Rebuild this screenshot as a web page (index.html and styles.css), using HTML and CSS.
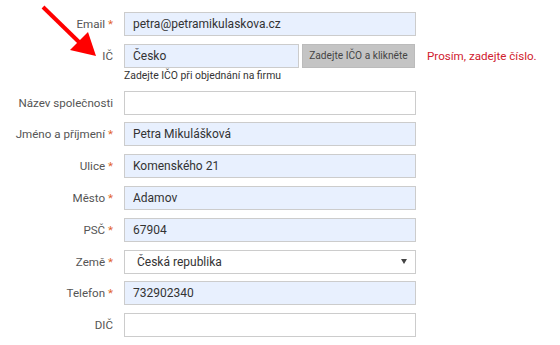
FILE: index.html
```html
<!DOCTYPE html>
<html lang="cs">
  <head>
    <meta charset="UTF-8" />
    <title>Objednávka</title>
    <link rel="stylesheet" href="styles.css">
  </head>
  <body>
    <svg class="arrow" width="110" height="70" viewBox="0 0 110 70">
      <line x1="43" y1="7" x2="80" y2="43" stroke="#ff0000" stroke-width="4" />
      <polygon points="96,56 70,50 88,32" fill="#ff0000" />
    </svg>

    <form class="order">
      <label class="order__label">Email <span class="req">*</span></label>
      <input class="order__input filled" type="text" value="petra@petramikulaskova.cz" />

      <label class="order__label">IČ</label>
      <div class="ico">
        <div class="ico__line">
          <div class="order__input filled ico__input">Česko</div>
          <button type="button" class="ico__btn">Zadejte IČO a klikněte</button>
          <span class="ico__error">Prosím, zadejte číslo.</span>
        </div>
        <div class="ico__hint">Zadejte IČO při objednání na firmu</div>
      </div>

      <label class="order__label">Název společnosti</label>
      <input class="order__input" type="text" />

      <label class="order__label">Jméno a příjmení <span class="req">*</span></label>
      <input class="order__input filled" type="text" value="Petra Mikulášková" />

      <label class="order__label">Ulice <span class="req">*</span></label>
      <input class="order__input filled" type="text" value="Komenského 21" />

      <label class="order__label">Město <span class="req">*</span></label>
      <input class="order__input filled" type="text" value="Adamov" />

      <label class="order__label">PSČ <span class="req">*</span></label>
      <input class="order__input filled" type="text" value="67904" />

      <label class="order__label">Země <span class="req">*</span></label>
      <div class="order__input select">
        <span>Česká republika</span>
        <span class="select__caret"></span>
      </div>

      <label class="order__label">Telefon <span class="req">*</span></label>
      <input class="order__input filled" type="text" value="732902340" />

      <label class="order__label">DIČ</label>
      <input class="order__input" type="text" />
    </form>
  </body>
</html>
```

FILE: styles.css
```css
body {
  margin: 0;
  padding: 0;
  background-color: #ffffff;
  font-family: Roboto, "Liberation Sans", Arial, sans-serif;
  font-size: 12px;
  color: #333;
  position: relative;
}
.arrow {
  position: absolute;
  left: 0;
  top: 0;
}
.order {
  display: grid;
  grid-template-columns: 113px 292px;
  column-gap: 11px;
  row-gap: 7.8px;
  padding-top: 12px;
  align-items: start;
}
.order__label {
  text-align: right;
  color: #555;
  font-size: 11.6px;
  line-height: 24px;
  white-space: nowrap;
}
.req {
  color: #e2622c;
}
.order__input {
  box-sizing: border-box;
  height: 24px;
  width: 292px;
  margin: 0;
  padding: 0 8px;
  border: 1px solid #cccccc;
  background-color: #ffffff;
  font-family: inherit;
  font-size: 12px;
  line-height: 22px;
  color: #333;
  outline: none;
}
.order__input.filled {
  background-color: #e8f0fe;
}
.ico__line {
  display: flex;
  align-items: center;
  white-space: nowrap;
}
.ico__line > * {
  flex-shrink: 0;
}
.ico__input {
  width: 175px;
}
.ico__btn {
  box-sizing: border-box;
  height: 24px;
  width: 113px;
  margin-left: 3px;
  padding: 0;
  border: 1px solid #bbbbbb;
  background-color: #c4c4c4;
  color: #444;
  font-family: inherit;
  font-size: 10.2px;
}
.ico__error {
  margin-left: 12px;
  color: #d0202e;
  font-size: 11.6px;
}
.ico__hint {
  margin-top: 1px;
  font-size: 10.4px;
  line-height: 14px;
  color: #333;
}
.select {
  display: flex;
  align-items: center;
  justify-content: space-between;
  padding: 0 8px 0 12px;
}
.select__caret {
  width: 0;
  height: 0;
  border-left: 3px solid transparent;
  border-right: 3px solid transparent;
  border-top: 5px solid #444;
}
```
